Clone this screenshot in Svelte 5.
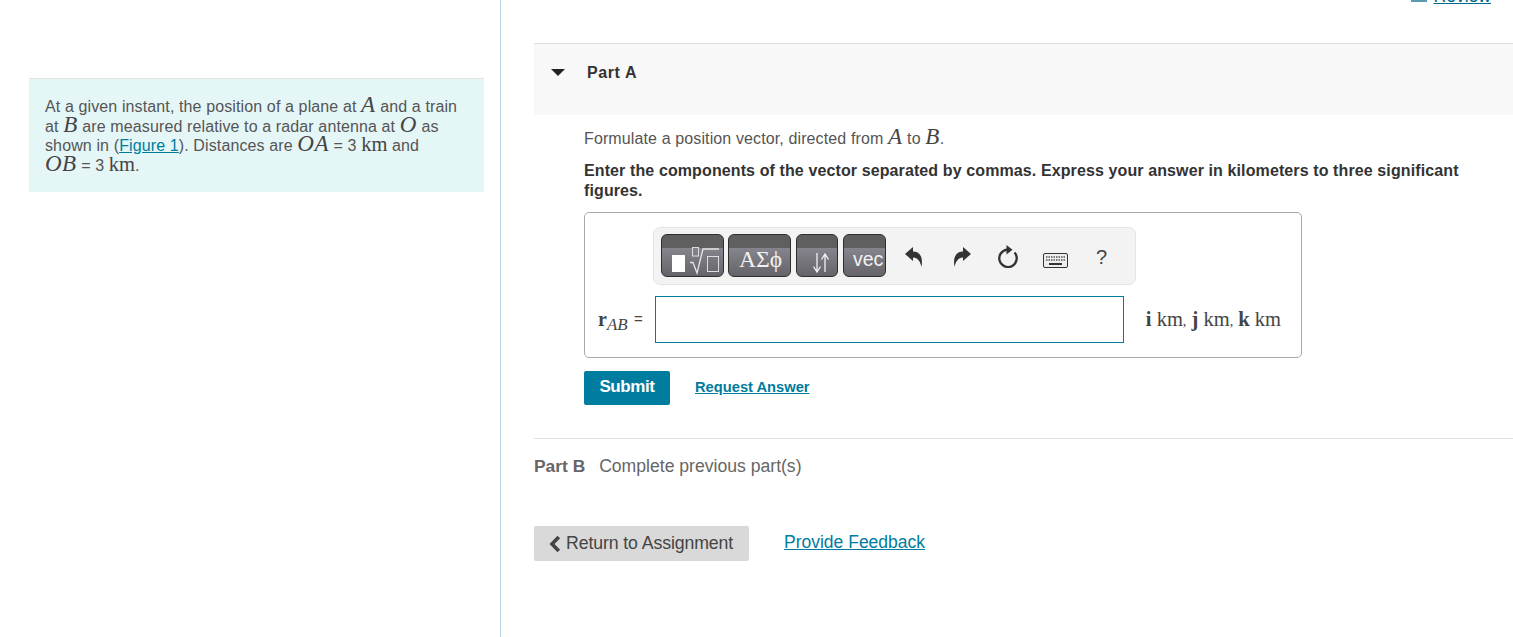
<script>
    const parts = ["i", "j", "k"];
</script>

<div class="page">
    <aside class="left">
        <div class="intro">
            At a given instant, the position of a plane at <span class="mi">A</span> and a train
            at <span class="mi">B</span> are measured relative to a radar antenna at <span class="mi">O</span> as
            shown in (<a href="#figure">Figure 1</a>). Distances are <span class="mi">OA</span> = 3 <span class="mn">km</span> and<br />
            <span class="mi">OB</span> = 3 <span class="mn">km</span>.
        </div>
    </aside>

    <main class="right">
        <div class="review-clip">
            <a class="review" href="#review"><span class="review-icon"></span><span class="review-text">Review</span></a>
        </div>

        <section class="part-a">
            <header class="part-head">
                <span class="caret"></span>
                <h2>Part A</h2>
            </header>
            <div class="part-body">
                <p class="prompt">Formulate a position vector, directed from <span class="mi">A</span> to <span class="mi">B</span>.</p>
                <p class="instr">Enter the components of the vector separated by commas. Express your answer in kilometers to three significant figures.</p>

                <div class="answer">
                    <div class="toolbar">
                        <button class="tb tb-tpl" aria-label="templates">
                            <svg width="61" height="41" viewBox="0 0 61 41">
                                <rect x="10" y="20" width="13" height="17" fill="#fff" />
                                <rect x="30.500" y="12.500" width="6" height="8.500" fill="none" stroke="#ddd" />
                                <path d="M28 27.500h3l4 10.500 6-24h16" fill="none" stroke="#e4e4e4" stroke-width="1.300" />
                                <rect x="45.500" y="21.500" width="11" height="15" fill="none" stroke="#ddd" />
                            </svg>
                        </button>
                        <button class="tb tb-greek">ΑΣϕ</button>
                        <button class="tb tb-arrows" aria-label="arrows">
                            <svg width="40" height="41" viewBox="0 0 40 41">
                                <path d="M20 18v18M16.500 31.500L20 37l3.500-5.500M28 37V19M24.500 24.500L28 19l3.500 5.500" fill="none" stroke="#f2f2f2" stroke-width="1.300" />
                            </svg>
                        </button>
                        <button class="tb tb-vec">vec</button>
                        <div class="tools">
                            <svg class="tool" width="18" height="20" viewBox="0 0 18 20" aria-label="undo">
                                <path d="M0 7L8 0V4.500C14 4.500 18.500 9 16.500 20 15.500 15 13 10.500 8 10.500V14Z" fill="#333" />
                            </svg>
                            <svg class="tool" width="18" height="20" viewBox="0 0 18 20" aria-label="redo">
                                <path d="M18 7L10 0V4.500C4 4.500-.5 9 1.500 20 2.500 15 5 10.500 10 10.500V14Z" fill="#333" />
                            </svg>
                            <svg class="tool" width="20" height="23" viewBox="0 0 20 23" aria-label="reset">
                                <path d="M9.500 4.600A8.700 8.700 0 1 0 16.500 7.500" fill="none" stroke="#333" stroke-width="2.300" />
                                <path d="M8.500 0V9.500L14.500 4.700Z" fill="#333" />
                            </svg>
                            <svg class="tool" width="25" height="15" viewBox="0 0 25 15" aria-label="keyboard">
                                <rect x="0.500" y="0.500" width="24" height="14" rx="1.500" fill="#eee" stroke="#333" />
                                <path d="M3 4h19M3 7h19" stroke="#555" stroke-width="1.500" stroke-dasharray="1.500 1" />
                                <path d="M6 11h13" stroke="#333" stroke-width="2" />
                            </svg>
                            <span class="help">?</span>
                        </div>
                    </div>

                    <div class="answer-row">
                        <span class="label"><b class="vec">r</b><sub>AB</sub> <span class="eq">=</span></span>
                        <input class="input" type="text" aria-label="answer" />
                        <span class="units">
                            {#each parts as p, i}
                                <b>{p}</b> km{#if i < parts.length - 1}<span class="comma">,</span>&nbsp;{/if}
                            {/each}
                        </span>
                    </div>
                </div>

                <div class="actions">
                    <button class="submit">Submit</button>
                    <a class="request" href="#request">Request Answer</a>
                </div>
            </div>
        </section>

        <section class="part-b">
            <b>Part B</b>
            <span>Complete previous part(s)</span>
        </section>

        <footer class="foot">
            <button class="back">
                <svg width="12" height="18" viewBox="0 0 12 18"><path d="M9.800 2L3 9l6.800 7" fill="none" stroke="#444" stroke-width="3.600" /></svg>
                Return to Assignment
            </button>
            <a class="feedback" href="#feedback">Provide Feedback</a>
        </footer>
    </main>
</div>

<style>
    :global(body) {
        margin: 0;
        background: #fff;
        overflow: hidden;
    }

    .page {
        display: flex;
        height: 637px;
        font-family: "Liberation Sans", Arial, sans-serif;
        font-size: 16px;
        color: #555;
    }

    .left {
        box-sizing: border-box;
        flex: 0 0 501px;
        height: 637px;
        padding: 78px 16px 0 29px;
        border-right: 1px solid #b9d3e3;
    }

    .intro {
        box-sizing: border-box;
        height: 114px;
        padding: 18px 16px 0;
        background: #e5f6f7;
        border-top: 1px solid #e0e4e4;
        line-height: 19.700px;
        letter-spacing: 0.12px;
    }

    .intro a {
        color: #007c9e;
    }

    .mi {
        font-family: "Liberation Serif", serif;
        font-style: italic;
        font-size: 23px;
        line-height: 1px;
        letter-spacing: 0.5px;
        color: #444;
    }

    .mn {
        font-family: "Liberation Serif", serif;
        font-size: 20.500px;
        line-height: 1px;
        letter-spacing: 0;
        color: #444;
    }

    .right {
        flex: 1;
        min-width: 0;
        padding-left: 33px;
    }

    .review-clip {
        display: flex;
        justify-content: flex-end;
        align-items: flex-end;
        height: 4px;
        margin-bottom: 39px;
        padding-right: 22px;
        overflow: hidden;
    }

    .review {
        display: flex;
        align-items: flex-end;
        gap: 7px;
        flex: none;
        color: #006a8a;
        font-size: 17.500px;
        line-height: 16px;
        text-decoration: underline;
    }

    .review-icon {
        width: 16px;
        height: 3px;
        margin-bottom: 2px;
        background: #5a9bb0;
    }

    .part-head {
        display: flex;
        align-items: flex-start;
        box-sizing: border-box;
        height: 72px;
        padding: 19px 0 0 17px;
        background: #f8f8f8;
        border-top: 1px solid #e0e0e0;
    }

    .caret {
        width: 0;
        height: 0;
        margin: 6px 22px 0 0;
        border-left: 7px solid transparent;
        border-right: 7px solid transparent;
        border-top: 7px solid #222;
    }

    h2 {
        margin: 0;
        font-size: 16px;
        line-height: 20px;
        font-weight: 700;
        color: #333;
        letter-spacing: 0.6px;
    }

    .part-body {
        padding: 14px 0 0 50px;
    }

    .prompt {
        margin: 0 0 13px;
        line-height: 19px;
        letter-spacing: 0.12px;
    }

    .instr {
        margin: 0 0 11px;
        max-width: 890px;
        font-weight: 700;
        line-height: 20px;
        font-size: 16px;
        letter-spacing: 0.11px;
        color: #333;
    }

    .answer {
        box-sizing: border-box;
        width: 718px;
        height: 146px;
        padding: 14px 20px 0 13px;
        border: 1px solid #aaa;
        border-radius: 5px;
    }

    .toolbar {
        display: flex;
        align-items: center;
        box-sizing: border-box;
        width: 483px;
        height: 58px;
        margin-left: 55px;
        padding: 0 0 1px 7px;
        background: #f3f3f3;
        border: 1px solid #e4e4e4;
        border-radius: 7px;
    }

    .tb {
        box-sizing: border-box;
        height: 43px;
        margin-right: 5px;
        padding: 0;
        border: 1px solid #2e2e2e;
        border-radius: 6px;
        background: linear-gradient(#5f5f5f 13px, #86848c 13px, #66646a);
        color: #f2f2f2;
        overflow: hidden;
    }

    .tb svg {
        display: block;
    }

    .tb-tpl {
        width: 63px;
        margin-right: 4px;
    }

    .tb-greek {
        width: 63px;
        padding: 8px 0 0 2px;
        font-family: "Liberation Serif", serif;
        font-size: 23.500px;
    }

    .tb-arrows {
        width: 42px;
    }

    .tb-vec {
        width: 43px;
        padding: 8px 0 0 9px;
        font-family: "Liberation Sans", sans-serif;
        font-size: 19.500px;
        text-align: left;
    }

    .tools {
        display: flex;
        align-items: flex-start;
        margin-left: 14px;
        height: 24px;
        margin-top: 2px;
    }

    .tool {
        display: block;
        flex: none;
    }

    .tool:nth-child(1) {
        margin: 2px 30px 0 0;
    }

    .tool:nth-child(2) {
        margin: 2px 27px 0 0;
    }

    .tool:nth-child(3) {
        margin-right: 25px;
    }

    .tool:nth-child(4) {
        margin: 8px 28px 0 0;
    }

    .help {
        margin-top: 1px;
        font-size: 20px;
        line-height: 22px;
        color: #444;
    }

    .answer-row {
        display: flex;
        align-items: center;
        margin-top: 11px;
    }

    .label {
        flex: 0 0 57px;
        font-family: "Liberation Serif", serif;
        font-size: 17px;
        color: #444;
    }

    .vec {
        font-size: 20px;
    }

    sub {
        font-style: italic;
        font-size: 17px;
        line-height: 1px;
    }

    .eq {
        margin-left: 2px;
        font-family: "Liberation Sans", sans-serif;
        font-size: 15px;
        position: relative;
        top: -2px;
    }

    .input {
        box-sizing: border-box;
        width: 469px;
        height: 47px;
        margin: 0;
        padding: 0 8px;
        border: 1px solid #007c9e;
        background: #fff;
        outline: none;
    }

    .units {
        margin-left: 22px;
        font-family: "Liberation Serif", serif;
        font-size: 20.500px;
        color: #444;
        white-space: nowrap;
    }

    .comma {
        font-size: 14px;
    }

    .actions {
        display: flex;
        align-items: center;
        gap: 25px;
        margin-top: 13px;
    }

    .submit {
        box-sizing: border-box;
        width: 86px;
        height: 34px;
        padding: 0 0 2px;
        border: 0;
        border-radius: 2px;
        background: #007c9e;
        color: #fff;
        font: 700 17px "Liberation Sans", sans-serif;
        letter-spacing: -0.4px;
    }

    .request {
        margin-top: -2px;
        color: #007c9e;
        font-size: 14.700px;
        font-weight: 700;
    }

    .part-b {
        box-sizing: border-box;
        height: 88px;
        margin-top: 33px;
        padding-top: 17px;
        border-top: 1px solid #e0e0e0;
        color: #666;
        line-height: 20px;
        font-size: 17.600px;
    }

    .part-b b {
        font-size: 17.400px;
        margin-right: 9px;
    }

    .foot {
        display: flex;
        align-items: center;
        gap: 35px;
    }

    .back {
        display: flex;
        align-items: center;
        gap: 5px;
        box-sizing: border-box;
        width: 215px;
        height: 35px;
        padding: 0 0 0 15px;
        border: 0;
        border-radius: 2px;
        background: #d9d9d9;
        color: #444;
        font: 17.700px "Liberation Sans", sans-serif;
        letter-spacing: -0.1px;
    }

    .feedback {
        margin-top: -3px;
        color: #007c9e;
        font-size: 17.500px;
    }
</style>
